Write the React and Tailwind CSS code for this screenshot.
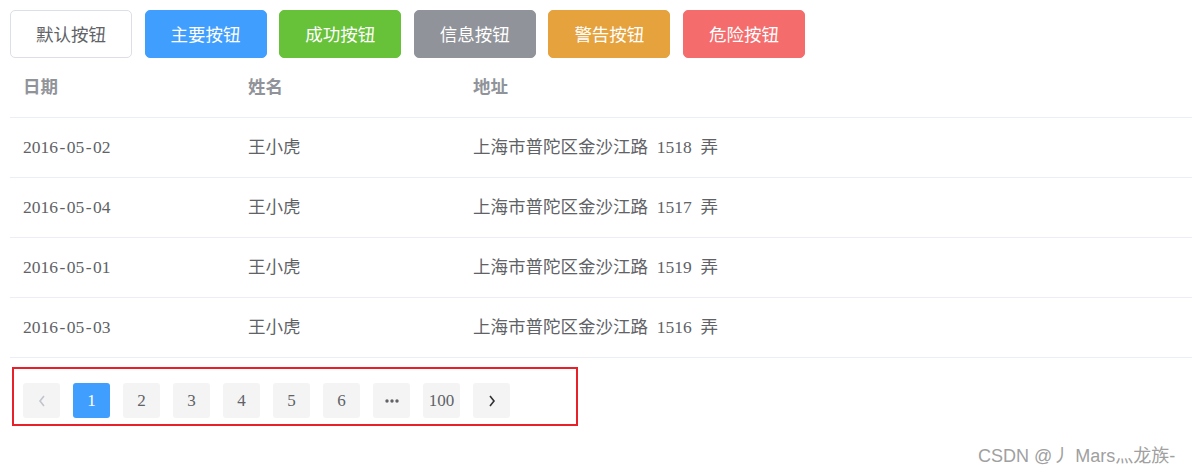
const buttons = [
  { label: "默认按钮", cls: "bg-white border border-[#dcdfe6] text-[#606266]" },
  { label: "主要按钮", cls: "bg-[#409eff] border border-[#409eff] text-white" },
  { label: "成功按钮", cls: "bg-[#67c23a] border border-[#67c23a] text-white" },
  { label: "信息按钮", cls: "bg-[#909399] border border-[#909399] text-white" },
  { label: "警告按钮", cls: "bg-[#e6a23c] border border-[#e6a23c] text-white" },
  { label: "危险按钮", cls: "bg-[#f56c6c] border border-[#f56c6c] text-white" },
]

const rows = [
  { date: "2016-05-02", name: "王小虎", no: "1518" },
  { date: "2016-05-04", name: "王小虎", no: "1517" },
  { date: "2016-05-01", name: "王小虎", no: "1519" },
  { date: "2016-05-03", name: "王小虎", no: "1516" },
]

const serif = "font-['Liberation_Serif','Noto_Sans_CJK_SC',serif]"

// half-width glyphs, like SimSun digits
function Half({ text }) {
  return (
    <span>
      {text.split("").map((c, i) => (
        <span key={i} className="inline-block w-[8.75px] text-center">{c === " " ? "\u00a0" : c}</span>
      ))}
    </span>
  )
}

function Pager() {
  const pages = ["1", "2", "3", "4", "5", "6", "more", "100"]
  return (
    <div className={`flex gap-[13px] ${serif}`}>
      <div className="w-[37px] h-[35px] rounded-[3px] bg-[#f4f4f5] flex items-center justify-center text-[#c0c4cc]">
        <svg width="10" height="14" viewBox="0 0 10 14" fill="none" stroke="currentColor" strokeWidth="1.6">
          <path d="M7 2 L3 7 L7 12" />
        </svg>
      </div>
      {pages.map((p, i) => (
        <div key={p}
          className={`w-[37px] h-[35px] rounded-[3px] flex items-center justify-center text-[17px] ${i === 0 ? "bg-[#409eff] text-white" : "bg-[#f4f4f5] text-[#606266]"}`}>
          {p === "more" ? (
            <svg width="14" height="4" viewBox="0 0 14 4" fill="#606266">
              <circle cx="2" cy="2" r="1.7" />
              <circle cx="7" cy="2" r="1.7" />
              <circle cx="12" cy="2" r="1.7" />
            </svg>
          ) : p}
        </div>
      ))}
      <div className="w-[37px] h-[35px] rounded-[3px] bg-[#f4f4f5] flex items-center justify-center text-[#303133]">
        <svg width="10" height="14" viewBox="0 0 10 14" fill="none" stroke="currentColor" strokeWidth="1.6">
          <path d="M3 2 L7 7 L3 12" />
        </svg>
      </div>
    </div>
  )
}

export default function App() {
  return (
    <div className="w-[1192px] h-[474px] bg-white pl-[10px] pt-[10px] font-['Noto_Sans_CJK_SC',sans-serif] relative overflow-hidden">
      <div className="flex gap-[12.6px]">
        {buttons.map(b => (
          <div key={b.label} className={`w-[122px] h-[48px] rounded-[5px] flex items-center justify-center text-[17.5px] ${b.cls}`}>
            {b.label}
          </div>
        ))}
      </div>

      <div className={`w-[1182px] ${serif} text-[17.5px]`}>
        <div className="flex h-[60px] items-center border-b border-[#ebeef5] text-[#909399] font-bold">
          <div className="w-[225px] pl-[13px]">日期</div>
          <div className="w-[225px] pl-[13px]">姓名</div>
          <div className="pl-[13px]">地址</div>
        </div>
        {rows.map(r => (
          <div key={r.date} className="flex h-[60px] items-center border-b border-[#ebeef5] text-[#606266]">
            <div className="w-[225px] pl-[13px]"><Half text={r.date} /></div>
            <div className="w-[225px] pl-[13px]">{r.name}</div>
            <div className="pl-[13px] whitespace-nowrap">
              上海市普陀区金沙江路<Half text={` ${r.no} `} />弄
            </div>
          </div>
        ))}
      </div>

      <div className="mt-[9px] ml-[2px] w-[566px] h-[59px] border-2 border-[#e8202a] flex items-start pt-[14px] pl-[9px]">
        <Pager />
      </div>

      <div className="absolute left-[978px] top-[443px] text-[18px] text-[#a0a0a0] font-['Liberation_Sans','Noto_Sans_CJK_SC',sans-serif]">
        CSDN @丿 Mars灬龙族-
      </div>
    </div>
  )
}
